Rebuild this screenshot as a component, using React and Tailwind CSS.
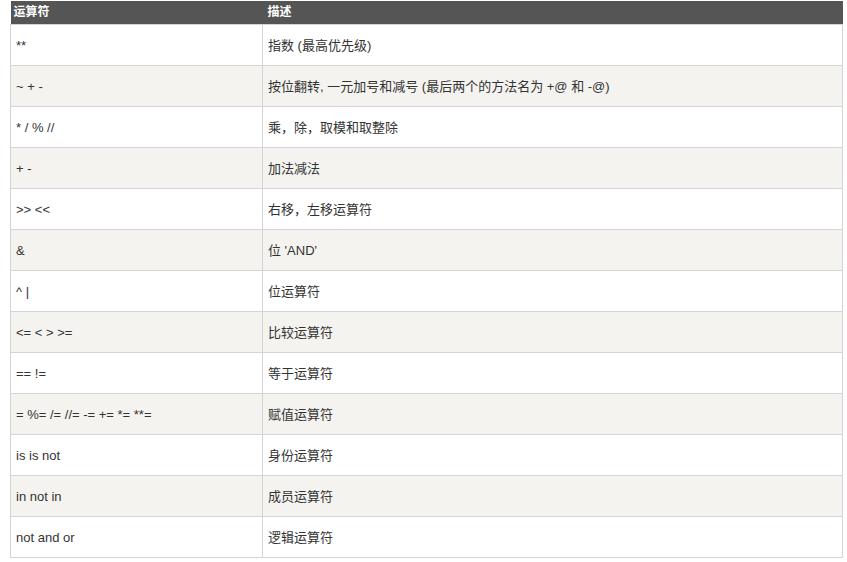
const rows = [
  ["**", "指数 (最高优先级)"],
  ["~ + -", "按位翻转, 一元加号和减号 (最后两个的方法名为 +@ 和 -@)"],
  ["* / % //", "乘，除，取模和取整除"],
  ["+ -", "加法减法"],
  [">> <<", "右移，左移运算符"],
  ["&", "位 'AND'"],
  ["^ |", "位运算符"],
  ["<= < > >=", "比较运算符"],
  ["== !=", "等于运算符"],
  ["= %= /= //= -= += *= **=", "赋值运算符"],
  ["is is not", "身份运算符"],
  ["in not in", "成员运算符"],
  ["not and or", "逻辑运算符"],
];

export default function App() {
  return (
    <div
      className="min-h-screen bg-white pt-px pl-[10px]"
      style={{ fontFamily: '"Liberation Sans", "Noto Sans CJK SC", Arial, sans-serif' }}
    >
      <table className="w-[833px] table-fixed border-collapse text-[13px] text-[#333]">
        <colgroup>
          <col className="w-[252px]" />
          <col />
        </colgroup>
        <thead>
          <tr className="h-[23px] bg-[#555555] text-left text-[12px] font-bold text-white">
            <th className="px-[3px] font-bold">运算符</th>
            <th className="px-[5px] font-bold">描述</th>
          </tr>
        </thead>
        <tbody>
          {rows.map(([op, desc], i) => (
            <tr key={op} className={i % 2 === 1 ? "h-[41px] bg-[#f4f3f0]" : "h-[41px] bg-white"}>
              <td className="border border-[#d4d4d4] px-[5px] pt-[2px] align-middle">{op}</td>
              <td className="border border-[#d4d4d4] px-[5px] pt-[2px] align-middle">{desc}</td>
            </tr>
          ))}
        </tbody>
      </table>
    </div>
  );
}
